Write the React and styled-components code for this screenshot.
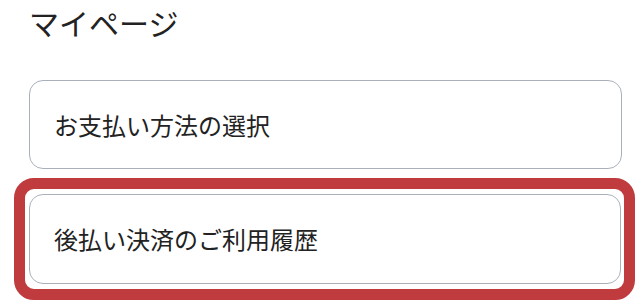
import React from 'react';
import styled, { createGlobalStyle } from 'styled-components';

const GlobalStyle = createGlobalStyle`
  html, body {
    margin: 0;
    padding: 0;
    background: #fff;
  }
  body {
    font-family: "Noto Sans CJK JP", "Noto Sans", sans-serif;
    color: #222;
  }
`;

const Page = styled.div`
  width: 640px;
  height: 306px;
  box-sizing: border-box;
  padding: 0 18px 0 29px;
  overflow: hidden;
`;

const Heading = styled.h1`
  margin: 0;
  padding-top: 4px;
  font-size: 30px;
  font-weight: 400;
  line-height: 36px;
  height: 44px;
  color: #222;
`;

const MenuList = styled.nav`
  display: flex;
  flex-direction: column;
  margin-top: 32px;
`;

/* the red highlight frame around the selected item */
const Highlight = styled.div`
  margin: 9px -13px 0 -15px;
  border: 11px solid #bf3b3d;
  border-radius: 20px;
  padding: 5px 3px 5px 4px;
  background: #fff;
`;

const MenuCard = styled.a`
  display: flex;
  align-items: center;
  box-sizing: border-box;
  height: ${p => p.$height || 89}px;
  padding: 0 24px;
  border: 1.5px solid #a9b0bc;
  border-radius: 14px;
  background: #fff;
  color: #222;
  font-size: 24px;
  line-height: 1;
  text-decoration: none;
  cursor: pointer;
`;

const items = [
  { label: 'お支払い方法の選択', active: false },
  { label: '後払い決済のご利用履歴', active: true },
];

export default function App() {
  return (
    <>
      <GlobalStyle />
      <Page>
        <Heading>マイページ</Heading>
        <MenuList>
          {items.map(item =>
            item.active ? (
              <Highlight key={item.label}>
                <MenuCard $height={90}>{item.label}</MenuCard>
              </Highlight>
            ) : (
              <MenuCard key={item.label}>{item.label}</MenuCard>
            )
          )}
        </MenuList>
      </Page>
    </>
  );
}
